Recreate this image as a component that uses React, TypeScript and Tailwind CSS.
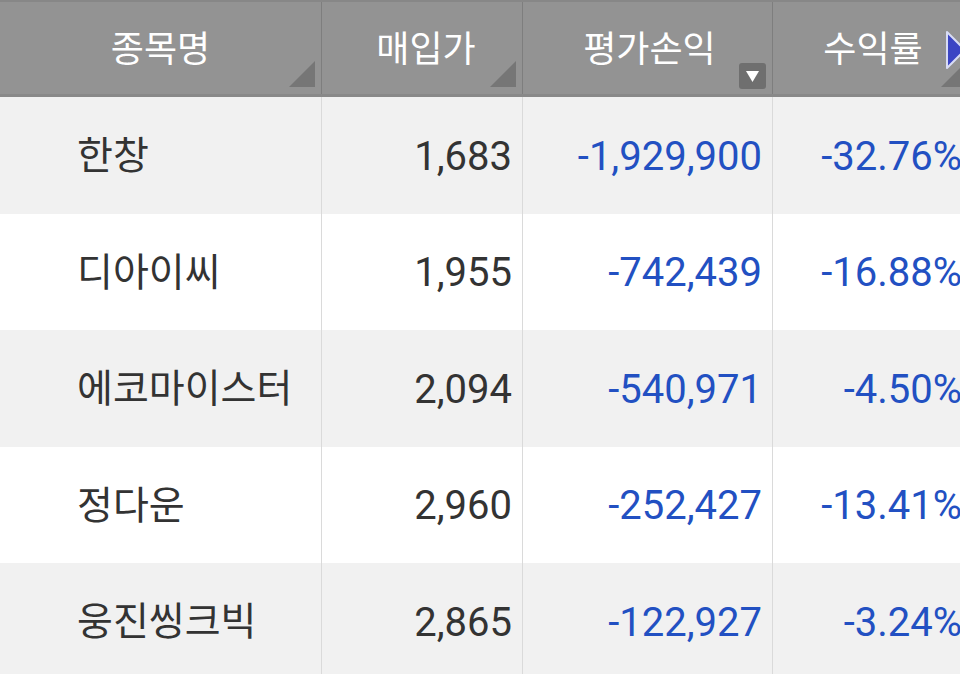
import React from "react";

const rows = [
  { name: "한창", price: "1,683", pl: "-1,929,900", rate: "-32.76%" },
  { name: "디아이씨", price: "1,955", pl: "-742,439", rate: "-16.88%" },
  { name: "에코마이스터", price: "2,094", pl: "-540,971", rate: "-4.50%" },
  { name: "정다운", price: "2,960", pl: "-252,427", rate: "-13.41%" },
  { name: "웅진씽크빅", price: "2,865", pl: "-122,927", rate: "-3.24%" },
];

const Corner = () => (
  <svg className="absolute right-[6px] bottom-[7px]" width="26" height="26" viewBox="0 0 26 26">
    <polygon points="26,0 26,26 0,26" fill="#767676" />
  </svg>
);

const font = { fontFamily: "Roboto, 'Noto Sans CJK KR', sans-serif" };

export default function App() {
  return (
    <div className="w-[960px] h-[674px] overflow-hidden bg-white" style={font}>
      <div className="w-[973px]">
        <div className="grid grid-cols-[322px_201px_250px_200px] h-[97px] bg-[#939393] border-t-2 border-[#878787] border-b-[3px] border-b-[#898989] text-white text-[36px]">
          <div className="relative flex items-center justify-center pt-[4px] border-r border-[#7e7e7e]">
            <span>종목명</span>
            <Corner />
          </div>
          <div className="relative flex items-center justify-center pt-[4px] border-r border-[#7e7e7e]">
            <span className="pl-[8px]">매입가</span>
            <Corner />
          </div>
          <div className="relative flex items-center justify-center pt-[4px] border-r border-[#7e7e7e]">
            <span className="pl-[4px]">평가손익</span>
            <svg className="absolute right-[6px] bottom-[5px]" width="27" height="26" viewBox="0 0 27 26">
              <rect x="0" y="0" width="27" height="26" rx="3" fill="#6f6f6f" />
              <polygon points="7,8 20,8 13.5,19" fill="#ffffff" />
            </svg>
          </div>
          <div className="relative flex items-center justify-center pt-[4px]">
            <span>수익률</span>
            <svg className="absolute left-[172px] top-[28px]" width="22" height="40" viewBox="0 0 22 40">
              <polygon points="2,2 20,20 2,38" fill="#3b45c4" stroke="#d8dcf5" strokeWidth="2" strokeLinejoin="round" />
            </svg>
            <Corner />
          </div>
        </div>
        {rows.map((r, i) => (
          <div
            key={r.name}
            className={`grid grid-cols-[322px_201px_250px_200px] h-[116.5px] ${i % 2 === 0 ? "bg-[#f1f1f1]" : "bg-white"}`}
          >
            <div className="flex items-center pl-[77px] pt-[2px] border-r border-[#dadada] text-[39px] text-[#333333]">
              {r.name}
            </div>
            <div className="flex items-center justify-end pr-[10px] pt-[3px] border-r border-[#dadada] text-[40px] text-[#333333]">
              {r.price}
            </div>
            <div className="flex items-center justify-end pr-[10px] pt-[3px] border-r border-[#dadada] text-[40px] text-[#2250c2]">
              {r.pl}
            </div>
            <div className="flex items-center justify-end pr-[11px] pt-[3px] text-[40px] text-[#2250c2]">
              {r.rate}
            </div>
          </div>
        ))}
      </div>
    </div>
  );
}
